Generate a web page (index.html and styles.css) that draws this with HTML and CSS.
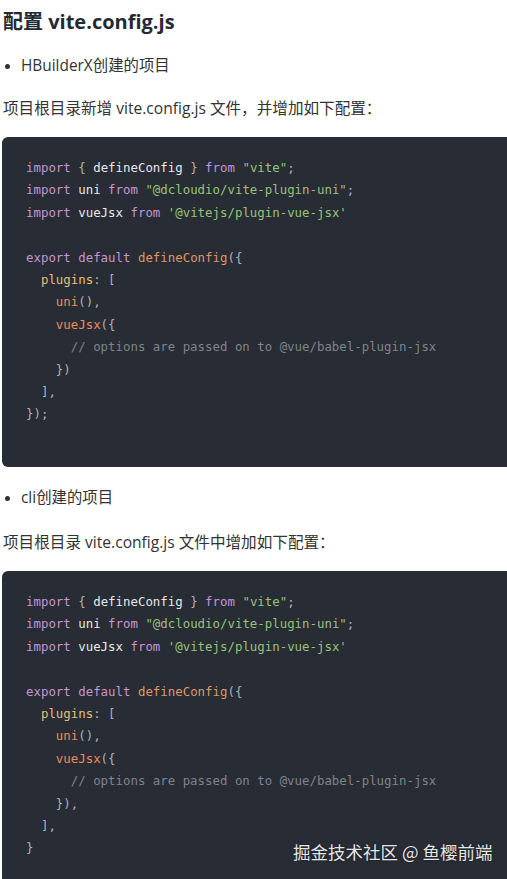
FILE: index.html
```html
<!DOCTYPE html>
<html lang="zh-CN">
<head>
<meta charset="utf-8">
<title>配置 vite.config.js</title>
<link rel="stylesheet" href="styles.css">
</head>
<body>
<main class="article">
  <h2 class="title">配置 vite.config.js</h2>
  <ul class="list"><li>HBuilderX创建的项目</li></ul>
  <p class="para">项目根目录新增 vite.config.js 文件，并增加如下配置：</p>
  <pre class="code"><code><span class="kw">import</span> <span class="pn">{</span> <span class="id">defineConfig</span> <span class="pn">}</span> <span class="kw">from</span> <span class="str">"vite"</span><span class="pn">;</span>
<span class="kw">import</span> <span class="id">uni</span> <span class="kw">from</span> <span class="str">"@dcloudio/vite-plugin-uni"</span><span class="pn">;</span>
<span class="kw">import</span> <span class="id">vueJsx</span> <span class="kw">from</span> <span class="str">'@vitejs/plugin-vue-jsx'</span>

<span class="kw">export</span> <span class="kw">default</span> <span class="fn">defineConfig</span><span class="pn">({</span>
  <span class="prop">plugins</span><span class="pn">: [</span>
    <span class="call">uni</span><span class="pn">(),</span>
    <span class="call">vueJsx</span><span class="pn">({</span>
      <span class="cm">// options are passed on to @vue/babel-plugin-jsx</span>
    <span class="pn">})</span>
  <span class="pn">],</span>
<span class="pn">});</span></code></pre>
  <ul class="list"><li>cli创建的项目</li></ul>
  <p class="para">项目根目录 vite.config.js 文件中增加如下配置：</p>
  <pre class="code"><code><span class="kw">import</span> <span class="pn">{</span> <span class="id">defineConfig</span> <span class="pn">}</span> <span class="kw">from</span> <span class="str">"vite"</span><span class="pn">;</span>
<span class="kw">import</span> <span class="id">uni</span> <span class="kw">from</span> <span class="str">"@dcloudio/vite-plugin-uni"</span><span class="pn">;</span>
<span class="kw">import</span> <span class="id">vueJsx</span> <span class="kw">from</span> <span class="str">'@vitejs/plugin-vue-jsx'</span>

<span class="kw">export</span> <span class="kw">default</span> <span class="fn">defineConfig</span><span class="pn">({</span>
  <span class="prop">plugins</span><span class="pn">: [</span>
    <span class="call">uni</span><span class="pn">(),</span>
    <span class="call">vueJsx</span><span class="pn">({</span>
      <span class="cm">// options are passed on to @vue/babel-plugin-jsx</span>
    <span class="pn">}),</span>
  <span class="pn">],</span>
<span class="pn">}</span></code></pre>
</main>
<div class="watermark">掘金技术社区 @ 鱼樱前端</div>
</body>
</html>
```

FILE: styles.css
```css
html, body {
  margin: 0;
  padding: 0;
  background: #ffffff;
  overflow: hidden;
}

body {
  font-family: "Open Sans", "Noto Sans CJK SC", sans-serif;
  color: #333333;
  height: 879px;
  position: relative;
}

.article {
  padding: 8px 0 0 3px;
}

.title {
  margin: 0;
  font-size: 20px;
  line-height: 28px;
  font-weight: 700;
  color: #252933;
}

.list {
  margin: 17px 0 0 0;
  padding: 0 0 0 18px;
  font-size: 15.4px;
  line-height: 26px;
}

.list li {
  list-style: disc;
}

.list li::marker {
  color: #333333;
  font-size: 13px;
}

.code + .list {
  margin-top: 18px;
}

.para {
  margin: 16px 0 0 0;
  font-size: 15.6px;
  line-height: 26px;
}

.code + .list + .para {
  margin-top: 18px;
}

.code {
  margin: 16px 0 0 -1px;
  padding: 20px 24px 41px 24px;
  background: #282c34;
  border-radius: 6px 0 0 6px;
  font-family: "DejaVu Sans Mono", "Liberation Mono", monospace;
  font-size: 12.4px;
  line-height: 22.4px;
  color: #abb2bf;
  white-space: pre;
  overflow: hidden;
}

.code code {
  font-family: inherit;
}

.kw { color: #c397d6; }
.pn { color: #abb2bf; }
.id { color: #e9e9e9; }
.str { color: #98c379; }
.fn { color: #dd9a68; }
.prop { color: #e3c07b; }
.call { color: #ec8c5c; }
.cm { color: #7f848e; }

.watermark {
  position: absolute;
  left: 293px;
  top: 840px;
  font-family: "Noto Sans CJK SC", sans-serif;
  font-size: 17.5px;
  line-height: 24px;
  color: #e6e6e6;
  text-shadow: 0 0 2px rgba(0, 0, 0, 0.5);
  white-space: nowrap;
}
```
